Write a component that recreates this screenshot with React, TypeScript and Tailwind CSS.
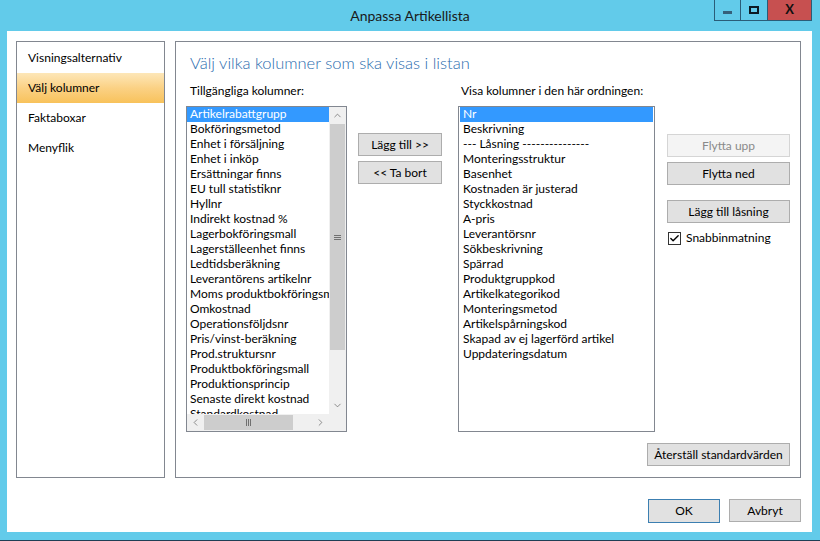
import { Check, ChevronUp, ChevronDown, ChevronLeft, ChevronRight } from "lucide-react";

const available = [
  "Artikelrabattgrupp",
  "Bokföringsmetod",
  "Enhet i försäljning",
  "Enhet i inköp",
  "Ersättningar finns",
  "EU tull statistiknr",
  "Hyllnr",
  "Indirekt kostnad %",
  "Lagerbokföringsmall",
  "Lagerställeenhet finns",
  "Ledtidsberäkning",
  "Leverantörens artikelnr",
  "Moms produktbokföringsmall",
  "Omkostnad",
  "Operationsföljdsnr",
  "Pris/vinst-beräkning",
  "Prod.struktursnr",
  "Produktbokföringsmall",
  "Produktionsprincip",
  "Senaste direkt kostnad",
  "Standardkostnad",
];

const shown = [
  "Nr",
  "Beskrivning",
  "--- Låsning ---------------",
  "Monteringsstruktur",
  "Basenhet",
  "Kostnaden är justerad",
  "Styckkostnad",
  "A-pris",
  "Leverantörsnr",
  "Sökbeskrivning",
  "Spärrad",
  "Produktgruppkod",
  "Artikelkategorikod",
  "Monteringsmetod",
  "Artikelspårningskod",
  "Skapad av ej lagerförd artikel",
  "Uppdateringsdatum",
];

const navItems = ["Visningsalternativ", "Välj kolumner", "Faktaboxar", "Menyflik"];

function Btn({ label, w, disabled, primary }: { label: string; w: string; disabled?: boolean; primary?: boolean }) {
  return (
    <button
      className={
        "h-[23px] flex items-center justify-center border text-[12px] font-normal leading-none " +
        w +
        (disabled
          ? " bg-[#f4f4f4] border-[#d5d5d5] text-[#8a8a8a]"
          : primary
          ? " bg-[#e1e1e1] border-[#3c7fb1] text-black"
          : " bg-[#e1e1e1] border-[#adadad] text-black")
      }
    >
      {label}
    </button>
  );
}

function Row({ text, selected }: { text: string; selected?: boolean }) {
  return (
    <div
      className={
        "h-[15px] pl-[3px] whitespace-nowrap overflow-hidden leading-[14px] " +
        (selected ? "bg-[#3399ff] text-white" : "text-black")
      }
    >
      {text}
    </div>
  );
}

export default function App() {
  return (
    <div
      className="w-[820px] h-[541px] bg-[#62cbea] flex flex-col text-[12px] text-black border-b border-[#1f3f55]"
      style={{ fontFamily: "Lato, 'Noto Sans', sans-serif" }}
    >
      {/* Title bar */}
      <div className="h-[31px] flex items-start">
        <div className="w-[106px]" />
        <div className="flex-1 text-center text-[14px] leading-[31px] text-[#1a1a1a]">Anpassa Artikellista</div>
        <div className="flex h-[21px] mr-[8px] border border-t-0 border-[#2a5d78]">
          <div className="w-[26px] flex items-center justify-center border-r border-[#2a5d78]">
            <div className="w-[9px] h-[3px] bg-[#35607a] mt-[4px]" />
          </div>
          <div className="w-[27px] flex items-center justify-center border-r border-[#2a5d78]">
            <div className="w-[10px] h-[8px] border-2 border-[#0d1a22]" />
          </div>
          <div className="w-[43px] bg-[#c75050] flex items-center justify-center text-[13px] font-bold text-[#111]">
            X
          </div>
        </div>
      </div>

      {/* Client area */}
      <div className="ml-[7px] w-[805px] h-[501px] bg-white flex flex-col pt-[10px] pl-[9px] pr-[11px]">
        <div className="flex gap-[10px] h-[437px]">
          {/* Left nav */}
          <div className="w-[149px] border border-[#828790] pt-[1px]">
            {navItems.map((n) => (
              <div
                key={n}
                className={
                  "h-[30px] flex items-center pl-[11px] " +
                  (n === "Välj kolumner" ? "bg-gradient-to-b from-[#fde7b8] via-[#fbd184] to-[#f8c25a]" : "")
                }
              >
                {n}
              </div>
            ))}
          </div>

          {/* Right panel */}
          <div className="w-[626px] border border-[#828790] flex flex-col pl-[10px] pr-[10px]">
            <div className="pt-[10px] pl-[4px] text-[16.5px] leading-[22px] text-[#2a6cae] font-light">
              Välj vilka kolumner som ska visas i listan
            </div>
            <div className="flex mt-[10px]">
              {/* Available columns */}
              <div className="w-[161px] flex flex-col">
                <div className="pl-[4px] h-[16px] leading-[14px] mb-[6px]">Tillgängliga kolumner:</div>
                <div className="h-[326px] border border-[#828790] flex flex-col">
                  <div className="flex h-[307px]">
                    <div className="w-[142px] overflow-hidden">
                      {available.map((t, i) => (
                        <Row key={t} text={t} selected={i === 0} />
                      ))}
                    </div>
                    <div className="w-[17px] bg-[#f0f0f0] flex flex-col">
                      <div className="h-[17px] flex items-center justify-center text-[#606060]">
                        <ChevronUp size={11} strokeWidth={1.5} />
                      </div>
                      <div className="h-[226px] mx-[1px] bg-[#cdcdcd] flex items-center justify-center">
                        <div className="flex flex-col gap-[1px]">
                          <div className="w-[7px] h-[1px] bg-[#707070]" />
                          <div className="w-[7px] h-[1px] bg-[#707070]" />
                          <div className="w-[7px] h-[1px] bg-[#707070]" />
                        </div>
                      </div>
                      <div className="flex-1" />
                      <div className="h-[17px] flex items-center justify-center text-[#606060]">
                        <ChevronDown size={11} strokeWidth={1.5} />
                      </div>
                    </div>
                  </div>
                  <div className="flex h-[17px] bg-[#f0f0f0]">
                    <div className="w-[17px] flex items-center justify-center text-[#606060]">
                      <ChevronLeft size={11} strokeWidth={1.5} />
                    </div>
                    <div className="w-[89px] my-[1px] bg-[#cdcdcd] flex items-center justify-center gap-[1px]">
                      <div className="w-[1px] h-[7px] bg-[#707070]" />
                      <div className="w-[1px] h-[7px] bg-[#707070]" />
                      <div className="w-[1px] h-[7px] bg-[#707070]" />
                    </div>
                    <div className="w-[19px]" />
                    <div className="w-[17px] flex items-center justify-center text-[#606060]">
                      <ChevronRight size={11} strokeWidth={1.5} />
                    </div>
                    <div className="w-[17px]" />
                  </div>
                </div>
              </div>

              {/* Middle buttons */}
              <div className="w-[84px] ml-[11px] flex flex-col gap-[5px] pt-[49px]">
                <Btn label="Lägg till >>" w="w-[84px]" />
                <Btn label="<< Ta bort" w="w-[84px]" />
              </div>

              {/* Shown columns */}
              <div className="w-[197px] ml-[16px] flex flex-col">
                <div className="pl-[3px] h-[16px] leading-[14px] mb-[6px]">Visa kolumner i den här ordningen:</div>
                <div className="h-[326px] border border-[#828790] pt-0 px-[1px]">
                  {shown.map((t, i) => (
                    <Row key={t} text={t} selected={i === 0} />
                  ))}
                </div>
              </div>

              {/* Right buttons */}
              <div className="w-[123px] ml-[12px] flex flex-col pt-[50px]">
                <Btn label="Flytta upp" w="w-[123px]" disabled />
                <div className="h-[5px]" />
                <Btn label="Flytta ned" w="w-[123px]" />
                <div className="h-[15px]" />
                <Btn label="Lägg till låsning" w="w-[123px]" />
                <div className="flex items-center gap-[5px] mt-[6px] pl-[1px]">
                  <div className="w-[13px] h-[13px] border border-[#333] bg-white flex items-center justify-center">
                    <Check size={11} strokeWidth={3} />
                  </div>
                  <span>Snabbinmatning</span>
                </div>
              </div>
            </div>
            <div className="flex justify-end mt-[11px] pr-[0px]">
              <Btn label="Återställ standardvärden" w="w-[143px]" />
            </div>
          </div>
        </div>

        {/* Bottom buttons */}
        <div className="flex justify-end gap-[9px] mt-[21px]">
          <Btn label="OK" w="w-[72px] h-[24px]" primary />
          <Btn label="Avbryt" w="w-[72px]" />
        </div>
      </div>
    </div>
  );
}
